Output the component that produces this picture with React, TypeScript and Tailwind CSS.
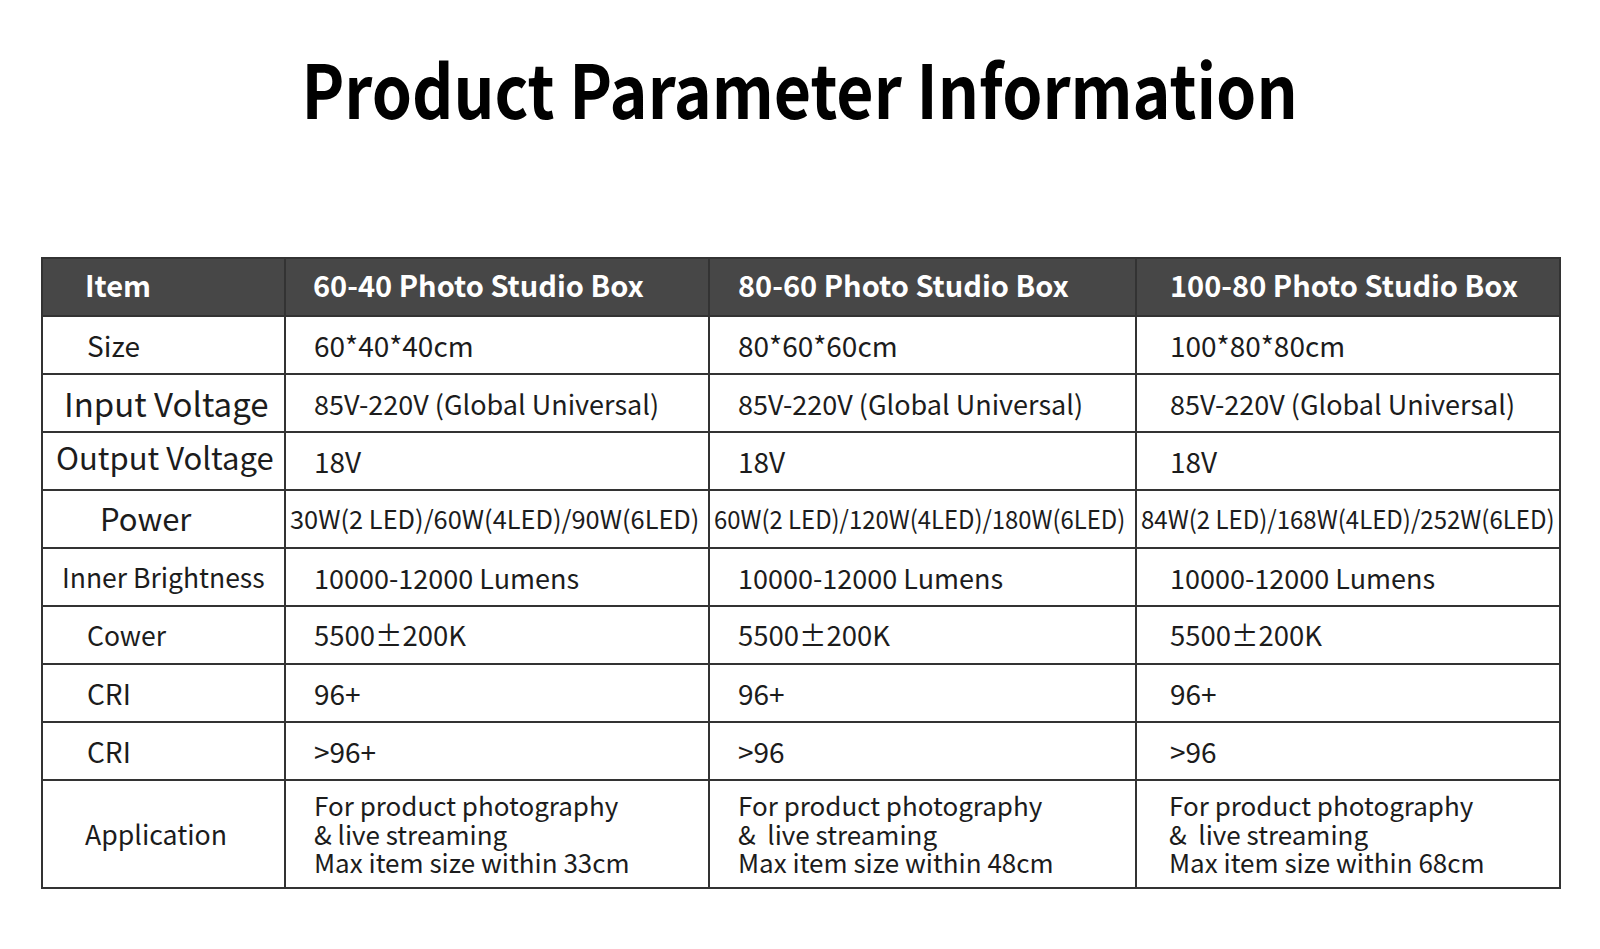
const font = { fontFamily: '"Noto Sans CJK SC", "Noto Sans", sans-serif' };

const headers = ["Item", "60-40 Photo Studio Box", "80-60 Photo Studio Box", "100-80 Photo Studio Box"];
const headPad = ["pl-[42px]", "pl-[27px]", "pl-[28px]", "pl-[33px]"];
const cellPad = ["pl-[28px]", "pl-[28px]", "pl-[33px]"];
// the wider power strings are squeezed to fit their column, as in the picture
const powerScale = ["", "scale-x-[0.94]", "scale-x-[0.945]"];

type Row = { label: string; labelClass: string; cells: string[]; cellSize: string; power?: boolean };

const rows: Row[] = [
  { label: "Size", labelClass: "pl-[44px] text-[28px]", cellSize: "text-[28px]", cells: ["60*40*40cm", "80*60*60cm", "100*80*80cm"] },
  { label: "Input Voltage", labelClass: "pl-[21px] text-[33px]", cellSize: "text-[27px]", cells: ["85V-220V (Global Universal)", "85V-220V (Global Universal)", "85V-220V (Global Universal)"] },
  { label: "Output Voltage", labelClass: "pl-[13px] text-[31px] pb-[10px]", cellSize: "text-[28px]", cells: ["18V", "18V", "18V"] },
  { label: "Power", labelClass: "pl-[57px] text-[31px] pb-[4px]", cellSize: "text-[25.4px]", cells: ["30W(2 LED)/60W(4LED)/90W(6LED)", "60W(2 LED)/120W(4LED)/180W(6LED)", "84W(2 LED)/168W(4LED)/252W(6LED)"], power: true },
  { label: "Inner Brightness", labelClass: "pl-[19px] text-[26.5px]", cellSize: "text-[27px]", cells: ["10000-12000 Lumens", "10000-12000 Lumens", "10000-12000 Lumens"] },
  { label: "Cower", labelClass: "pl-[44px] text-[26.5px]", cellSize: "text-[27.5px]", cells: ["5500±200K", "5500±200K", "5500±200K"] },
  { label: "CRI", labelClass: "pl-[44px] text-[28px]", cellSize: "text-[28px]", cells: ["96+", "96+", "96+"] },
  { label: "CRI", labelClass: "pl-[44px] text-[28px]", cellSize: "text-[28px]", cells: [">96+", ">96", ">96"] },
];

const apps = [
  { size: "33cm", amp: "& live streaming" },
  { size: "48cm", amp: "&\u00a0 live streaming" },
  { size: "68cm", amp: "&\u00a0 live streaming" },
];

export default function App() {
  return (
    <div className="w-[1600px] h-[949px] bg-white overflow-hidden text-[#1c1c1c]" style={font}>
      <h1 className="pt-[50px] h-[124px] text-center text-[74px] font-bold leading-none text-black">
        <span className="inline-block scale-x-[0.87]">Product Parameter Information</span>
      </h1>

      <table className="ml-[41px] mt-[133px] w-[1518px] table-fixed border-collapse border-2 border-[#333]">
        <colgroup>
          <col className="w-[243px]" />
          <col className="w-[424px]" />
          <col className="w-[427px]" />
          <col className="w-[424px]" />
        </colgroup>
        <thead>
          <tr className="h-[58px] bg-[#474747] text-white">
            {headers.map((h, i) => (
              <th
                key={h}
                className={`border-2 border-[#333] pb-[6px] text-left font-semibold text-[29px] leading-none whitespace-nowrap ${headPad[i]}`}
              >
                {h}
              </th>
            ))}
          </tr>
        </thead>
        <tbody>
          {rows.map((r, ri) => (
            <tr key={ri} className="h-[58px]">
              <td className={`border-2 border-[#333] leading-none whitespace-nowrap ${r.labelClass}`}>{r.label}</td>
              {r.cells.map((c, ci) => (
                <td
                  key={ci}
                  className={`border-2 border-[#333] leading-none whitespace-nowrap overflow-hidden ${r.cellSize} ${r.power ? "pl-[4px]" : cellPad[ci]}`}
                >
                  {r.power ? <span className={`inline-block origin-left ${powerScale[ci]}`}>{c}</span> : c}
                </td>
              ))}
            </tr>
          ))}
          <tr className="h-[108px]">
            <td className="border-2 border-[#333] pl-[42px] text-[26.7px] leading-none">Application</td>
            {apps.map((a, ai) => (
              <td key={a.size} className={`border-2 border-[#333] text-[26px] leading-[28.5px] ${ai === 2 ? "pl-[32px]" : "pl-[28px]"}`}>
                For product photography
                <br />
                {a.amp}
                <br />
                Max item size within {a.size}
              </td>
            ))}
          </tr>
        </tbody>
      </table>
    </div>
  );
}
